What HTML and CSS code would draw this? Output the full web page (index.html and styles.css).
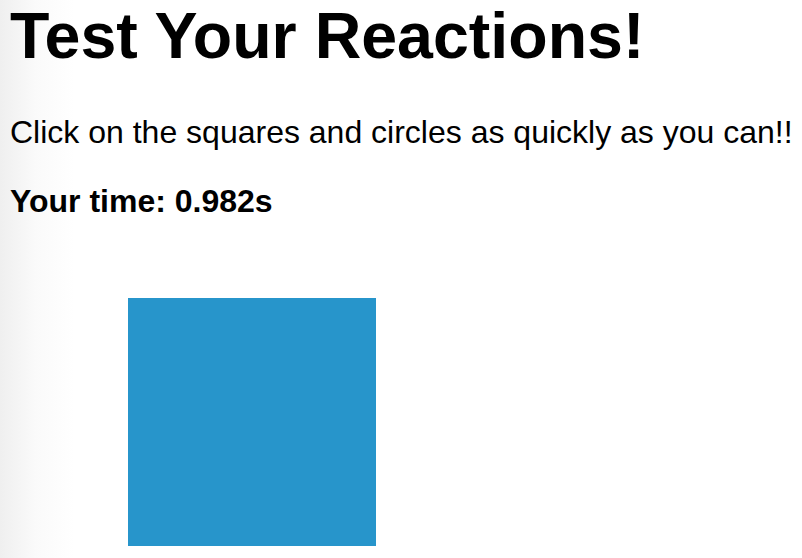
FILE: index.html
```html
<!DOCTYPE html>
<html>
<head>
<meta charset="utf-8">
<link rel="stylesheet" href="styles.css">
</head>
<body>
<main class="page">
  <h1 class="title">Test Your Reactions!</h1>
  <p class="intro">Click on the squares and circles as quickly as you can!!</p>
  <p class="time">Your time: <span class="time-value">0.982s</span></p>
  <div class="arena">
    <div class="shape"></div>
  </div>
</main>
</body>
</html>
```
FILE: styles.css
```css
html, body {
  margin: 0;
  padding: 0;
  height: 100%;
}
body {
  background: linear-gradient(to right, #efefef 0px, #fafafa 35px, #ffffff 75px);
  font-family: "Liberation Sans", Arial, Helvetica, sans-serif;
  color: #000;
  overflow: hidden;
}
.page {
  padding: 0 0 0 10px;
}
.title {
  margin: 4px 0 0 0;
  font-size: 64.5px;
  line-height: 64px;
  font-weight: bold;
  white-space: nowrap;
}
.intro {
  margin: 46px 0 0 0;
  font-size: 32px;
  line-height: 36px;
  white-space: nowrap;
}
.time {
  margin: 33px 0 0 0;
  font-size: 32px;
  line-height: 36px;
  font-weight: bold;
}
.arena {
  padding: 79px 0 0 118px;
}
.shape {
  width: 248px;
  height: 248px;
  background: #2795cb;
}
```
